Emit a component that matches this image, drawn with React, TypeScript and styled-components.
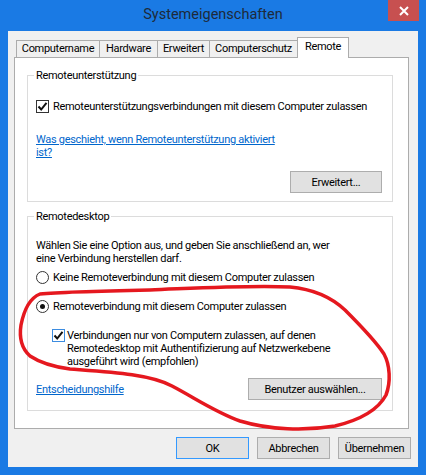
import React from "react";
import styled, { createGlobalStyle } from "styled-components";

const GlobalStyle = createGlobalStyle`
  html, body { margin: 0; padding: 0; }
  body {
    font-family: Roboto, "Liberation Sans", Arial, sans-serif;
    font-size: 11px;
    letter-spacing: -0.3px;
    color: #000;
    background: #1a7ae4;
  }
  * { box-sizing: border-box; }
`;

const Window = styled.div`
  position: relative;
  width: 426px;
  height: 475px;
  background: #1a7ae4;
  display: flex;
  flex-direction: column;
  overflow: hidden;
`;

const TitleBar = styled.div`
  height: 31px;
  display: grid;
  grid-template-columns: 1fr auto 1fr;
  align-items: start;
`;

const Title = styled.div`
  grid-column: 2;
  font-family: Roboto, "Liberation Sans", sans-serif;
  font-size: 14.5px;
  letter-spacing: 0;
  line-height: 30px;
  color: #1e2a3a;
`;

const CloseButton = styled.div`
  grid-column: 3;
  justify-self: end;
  margin-right: 7px;
  width: 31px;
  height: 21px;
  background: #c75050;
  display: flex;
  align-items: center;
  justify-content: center;
`;

const Client = styled.div`
  flex: 1;
  margin: 0 8px 8px 8px;
  background: #f0f0f0;
  padding: 7px 9px 8px 6px;
  display: flex;
  flex-direction: column;
`;

const TabStrip = styled.div`
  height: 20px;
  display: flex;
  align-items: flex-end;
  padding-left: 2px;
  position: relative;
  z-index: 1;
  margin-bottom: -1px;
`;

const Tab = styled.div<{ $w: number; $active?: boolean }>`
  width: ${(p) => p.$w}px;
  height: ${(p) => (p.$active ? 21 : 18)}px;
  margin-left: -1px;
  border: 1px solid #acacac;
  border-bottom: ${(p) => (p.$active ? "none" : "1px solid #acacac")};
  background: ${(p) => (p.$active ? "#ffffff" : "#f0f0f0")};
  display: flex;
  justify-content: center;
  align-items: ${(p) => (p.$active ? "flex-start" : "center")};
  padding-top: ${(p) => (p.$active ? "2px" : "0")};
  line-height: 14px;
  white-space: nowrap;
  &:first-child { margin-left: 0; }
`;

const Panel = styled.div`
  height: 372px;
  background: #fff;
  border: 1px solid #acacac;
  padding: 17px 15px 0 12px;
  display: flex;
  flex-direction: column;
`;

const Group = styled.div<{ $h: number; $mt?: number }>`
  position: relative;
  height: ${(p) => p.$h}px;
  margin-top: ${(p) => p.$mt ?? 0}px;
  border: 1px solid #dcdcdc;
  padding: 0 10px 0 8px;
  display: flex;
  flex-direction: column;
`;

const Legend = styled.span`
  position: absolute;
  left: 6px;
  top: -8px;
  background: #fff;
  padding: 0 2px;
  line-height: 15px;
`;

const Row = styled.div<{ $mt: number; $indent?: number }>`
  display: flex;
  align-items: center;
  gap: 4px;
  margin-top: ${(p) => p.$mt}px;
  margin-left: ${(p) => p.$indent ?? 0}px;
  line-height: 13px;
  white-space: nowrap;
`;

const TopRow = styled(Row)`
  align-items: flex-start;
  white-space: normal;
`;

const Text = styled.div<{ $mt?: number }>`
  margin-top: ${(p) => p.$mt ?? 0}px;
  line-height: 13px;
  white-space: nowrap;
`;

const Link = styled.a<{ $mt?: number }>`
  display: block;
  margin-top: ${(p) => p.$mt ?? 0}px;
  color: #0066cc;
  text-decoration: underline;
  line-height: 13px;
  white-space: nowrap;
  cursor: pointer;
`;

const Box = styled.span<{ $hot?: boolean }>`
  flex: none;
  width: 13px;
  height: 13px;
  border: 1px solid ${(p) => (p.$hot ? "#3c8ce0" : "#333333")};
  background: #fff;
  display: flex;
  align-items: center;
  justify-content: center;
`;

const Radio = styled.span<{ $on?: boolean }>`
  flex: none;
  width: 13px;
  height: 13px;
  border-radius: 50%;
  border: 1px solid #333333;
  background: #fff;
  display: flex;
  align-items: center;
  justify-content: center;
  &::after {
    content: "";
    display: ${(p) => (p.$on ? "block" : "none")};
    width: 5px;
    height: 5px;
    border-radius: 50%;
    background: #111;
  }
`;

const Button = styled.div<{ $w: number; $default?: boolean }>`
  flex: none;
  width: ${(p) => p.$w}px;
  height: 22px;
  border: 1px solid ${(p) => (p.$default ? "#3399ff" : "#adadad")};
  background: #e1e1e1;
  display: flex;
  align-items: center;
  justify-content: center;
  white-space: nowrap;
`;

const RightButton = styled(Button)<{ $mt: number }>`
  align-self: flex-end;
  margin-top: ${(p) => p.$mt}px;
`;

const SplitRow = styled.div<{ $mt: number }>`
  margin-top: ${(p) => p.$mt}px;
  display: flex;
  align-items: center;
  justify-content: space-between;
`;

const ButtonRow = styled.div`
  margin-top: 8px;
  margin-right: -2px;
  display: flex;
  justify-content: flex-end;
  gap: 8px;
`;

const Scribble = styled.svg`
  position: absolute;
  left: 0;
  top: 0;
  pointer-events: none;
`;

const Check = () => (
  <svg width="11" height="11" viewBox="0 0 11 11">
    <path d="M1.5 5.5 L4.2 8.5 L9.5 1.8" fill="none" stroke="#111" strokeWidth="2" />
  </svg>
);

export default function App() {
  return (
    <>
      <GlobalStyle />
      <Window>
        <TitleBar>
          <Title>Systemeigenschaften</Title>
          <CloseButton>
            <svg width="10" height="10" viewBox="0 0 10 10">
              <path d="M1 1 L9 9 M9 1 L1 9" stroke="#fff" strokeWidth="2" />
            </svg>
          </CloseButton>
        </TitleBar>
        <Client>
          <TabStrip>
            <Tab $w={84}>Computername</Tab>
            <Tab $w={59}>Hardware</Tab>
            <Tab $w={53}>Erweitert</Tab>
            <Tab $w={89}>Computerschutz</Tab>
            <Tab $w={52} $active>Remote</Tab>
          </TabStrip>
          <Panel>
            <Group $h={127}>
              <Legend>Remoteunterstützung</Legend>
              <Row $mt={24}>
                <Box><Check /></Box>
                <span>Remoteunterstützungsverbindungen mit diesem Computer zulassen</span>
              </Row>
              <Link $mt={20}>
                Was geschieht, wenn Remoteunterstützung aktiviert
                <br />
                ist?
              </Link>
              <RightButton $w={92} $mt={12}>Erweitert...</RightButton>
            </Group>
            <Group $h={195} $mt={14}>
              <Legend>Remotedesktop</Legend>
              <Text $mt={22}>
                Wählen Sie eine Option aus, und geben Sie anschließend an, wer
                <br />
                eine Verbindung herstellen darf.
              </Text>
              <Row $mt={6}>
                <Radio />
                <span>Keine Remoteverbindung mit diesem Computer zulassen</span>
              </Row>
              <Row $mt={16}>
                <Radio $on />
                <span>Remoteverbindung mit diesem Computer zulassen</span>
              </Row>
              <TopRow $mt={16} $indent={16} style={{ gap: 2 }}>
                <Box $hot><Check /></Box>
                <Text>
                  Verbindungen nur von Computern zulassen, auf denen
                  <br />
                  Remotedesktop mit Authentifizierung auf Netzwerkebene
                  <br />
                  ausgeführt wird (empfohlen)
                </Text>
              </TopRow>
              <SplitRow $mt={10}>
                <Link>Entscheidungshilfe</Link>
                <Button $w={134}>Benutzer auswählen...</Button>
              </SplitRow>
            </Group>
          </Panel>
          <ButtonRow>
            <Button $w={73} $default>OK</Button>
            <Button $w={73}>Abbrechen</Button>
            <Button $w={73}>Übernehmen</Button>
          </ButtonRow>
        </Client>
        <Scribble width="426" height="475" viewBox="0 0 426 475">
          <path
            d="M70 369 C110 372 150 374 172 386 C195 398 215 412 240 421 C270 430 305 431 335 426 C360 420 378 410 386 395 C391 382 390 365 384 354 C375 340 360 325 345 310 C330 296 312 289 290 287 C250 285 200 288 150 290 C100 291 60 292 40 294 C30 298 24 310 21 325 C19 338 21 348 30 356 C42 364 55 367 70 369 Z"
            fill="none"
            stroke="#e5181f"
            strokeWidth="3.5"
            strokeLinejoin="round"
          />
        </Scribble>
      </Window>
    </>
  );
}
